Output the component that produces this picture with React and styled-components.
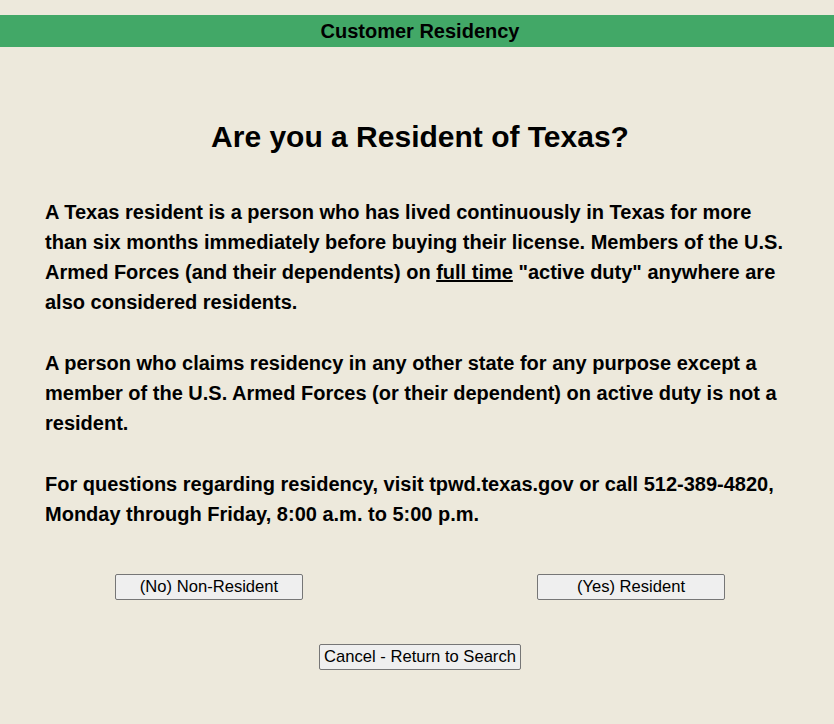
import styled, { createGlobalStyle } from "styled-components";

const GlobalStyle = createGlobalStyle`
  html, body {
    margin: 0;
    padding: 0;
    background: #ede9dc;
  }
  body {
    font-family: "Liberation Sans", Arial, sans-serif;
    color: #000;
  }
`;

const Page = styled.div`
  padding-top: 15px;
  padding-bottom: 40px;
`;

const Header = styled.div`
  background: #42a867;
  height: 32px;
  display: flex;
  align-items: center;
  justify-content: center;
  padding-left: 6px;
  font-size: 20px;
  font-weight: bold;
`;

const Title = styled.h1`
  margin: 73px 0 0;
  padding-left: 6px;
  text-align: center;
  font-size: 30px;
  font-weight: bold;
  line-height: 34px;
`;

const Body = styled.div`
  padding: 0 45px;
  margin-top: 43px;
`;

const Para = styled.p`
  margin: 0 0 31px;
  font-size: 20px;
  font-weight: bold;
  line-height: 30px;
`;

const Underline = styled.span`
  text-decoration: underline;
`;

const ChoiceRow = styled.div`
  display: flex;
  justify-content: space-between;
  padding: 0 109px 0 115px;
  margin-top: 45px;
`;

const Button = styled.button`
  box-sizing: border-box;
  width: ${(p) => p.$width || 188}px;
  height: 26px;
  padding: 0;
  font-family: "Liberation Sans", Arial, sans-serif;
  font-size: 16.6px;
  color: #000;
  background: #efefef;
  border: 1px solid #767676;
  border-radius: 2px;
  cursor: pointer;
`;

const CancelRow = styled.div`
  display: flex;
  justify-content: center;
  padding-left: 6px;
  margin-top: 44px;
`;

export default function App() {
  return (
    <Page>
      <GlobalStyle />
      <Header>Customer Residency</Header>
      <Title>Are you a Resident of Texas?</Title>
      <Body>
        <Para>
          A Texas resident is a person who has lived continuously in Texas for
          more than six months immediately before buying their license. Members
          of the U.S. Armed Forces (and their dependents) on{" "}
          <Underline>full time</Underline> "active duty" anywhere are also
          considered residents.
        </Para>
        <Para>
          A person who claims residency in any other state for any purpose
          except a member of the U.S. Armed Forces (or their dependent) on
          active duty is not a resident.
        </Para>
        <Para>
          For questions regarding residency, visit tpwd.texas.gov or call
          512-389-4820, Monday through Friday, 8:00 a.m. to 5:00 p.m.
        </Para>
      </Body>
      <ChoiceRow>
        <Button>(No) Non-Resident</Button>
        <Button>(Yes) Resident</Button>
      </ChoiceRow>
      <CancelRow>
        <Button $width={202}>Cancel - Return to Search</Button>
      </CancelRow>
    </Page>
  );
}
